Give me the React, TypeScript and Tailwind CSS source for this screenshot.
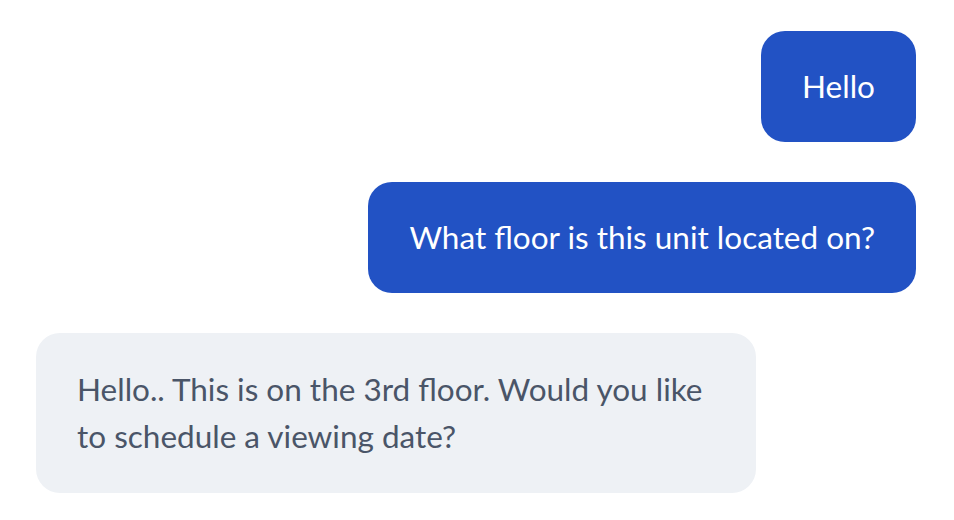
const messages = [
  { id: 1, from: "me", text: "Hello" },
  { id: 2, from: "me", text: "What floor is this unit located on?" },
  {
    id: 3,
    from: "agent",
    text: "Hello.. This is on the 3rd floor. Would you like to schedule a viewing date?",
  },
];

export default function App() {
  return (
    <div className="min-h-[520px] w-full bg-white font-['Lato',sans-serif] pl-[36px] pr-[38px] pt-[31px]">
      <div className="flex flex-col gap-[40px]">
        {messages.map((m) =>
          m.from === "me" ? (
            <div key={m.id} className="flex justify-end">
              <div className="rounded-[24px] bg-[#2252c4] px-[41px] py-[32px] text-[31.5px] leading-[47px] text-white">
                {m.text}
              </div>
            </div>
          ) : (
            <div key={m.id} className="flex justify-start">
              <div className="w-[720px] rounded-[24px] bg-[#eef1f5] px-[41px] py-[33px] text-[31.5px] leading-[47px] text-[#4a5568]">
                {m.text}
              </div>
            </div>
          )
        )}
      </div>
    </div>
  );
}
